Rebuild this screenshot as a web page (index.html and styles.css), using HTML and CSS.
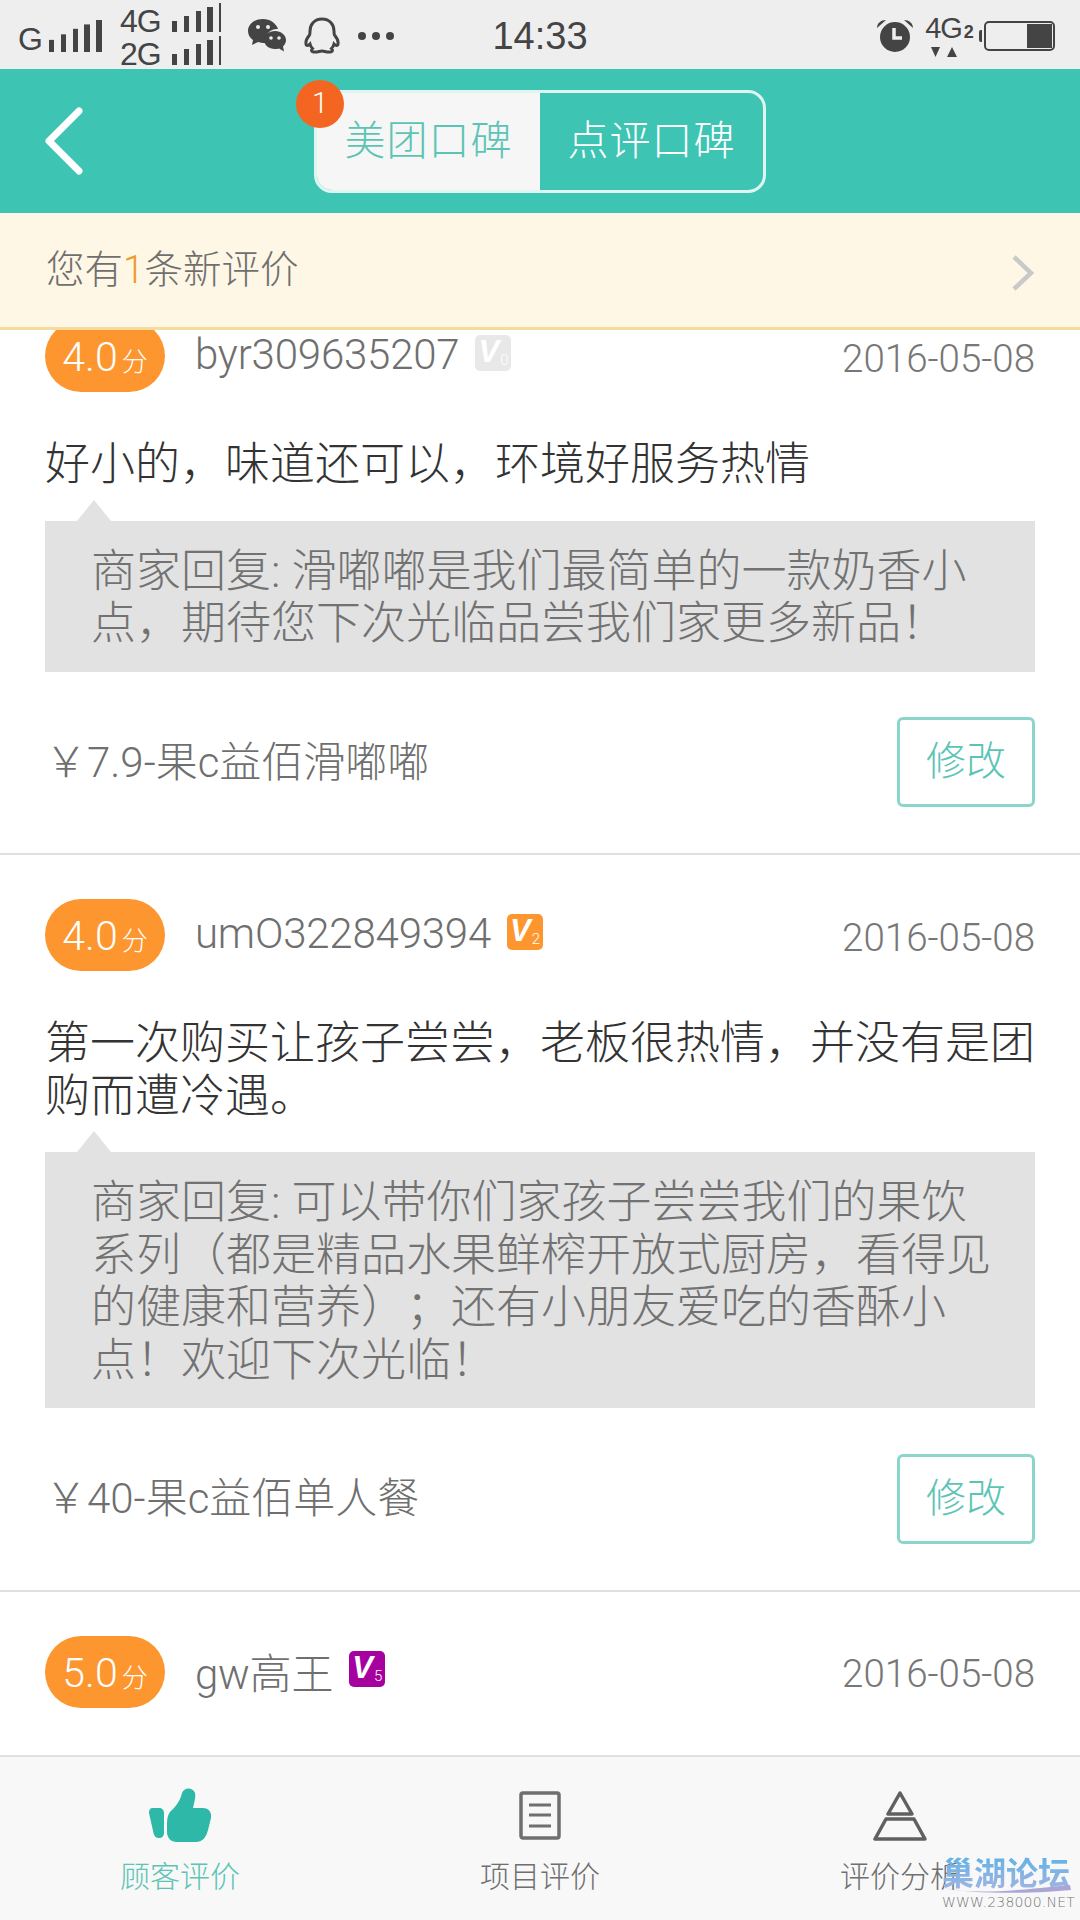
FILE: index.html
```html
<!DOCTYPE html>
<html lang="zh-CN">

<head>
    <title>顾客评价</title>
    <meta charset="utf-8">
    <link rel="stylesheet" href="styles.css">
</head>

<body>
    <svg class="defs" width="0" height="0">
        <symbol id="bars" viewBox="0 0 53 29" preserveAspectRatio="none">
            <rect x="0" y="18" width="5" height="11" />
            <rect x="12" y="13" width="5" height="16" />
            <rect x="24" y="8" width="5" height="21" />
            <rect x="35" y="4" width="6" height="25" />
            <rect x="47" y="0" width="6" height="29" />
        </symbol>
    </svg>

    <div class="app">
        <div class="status">
            <div class="status_left">
                <span class="net net_g">G</span>
                <svg class="bars_big" width="53" height="32"><use href="#bars" width="53" height="32" /></svg>
                <div class="sims">
                    <div class="sim"><span class="net">4G</span><svg width="53" height="29"><use href="#bars" width="53" height="29" /></svg></div>
                    <div class="sim"><span class="net">2G</span><svg width="53" height="29"><use href="#bars" width="53" height="29" /></svg></div>
                </div>
                <svg class="ic_wechat" width="38" height="33" viewBox="0 0 38 33">
                    <path d="M15 0C7 0 0 5 0 12c0 4 2 7 5 9l-1 5 6-3c1 0 3 1 5 1 1 0 2 0 3-.2A11 11 0 0 1 30 10C28 4 22 0 15 0z" fill="#444" />
                    <circle cx="10" cy="8" r="2" fill="#eee" />
                    <circle cx="20" cy="8" r="2" fill="#eee" />
                    <path d="M27 12c-6 0-11 4-11 9s5 9 11 9c1 0 3 0 4-.6l5 3-1-5c2-2 3-4 3-6.400 0-5-5-9-11-9z" fill="#444" />
                    <circle cx="23" cy="19" r="1.800" fill="#eee" />
                    <circle cx="31" cy="19" r="1.800" fill="#eee" />
                </svg>
                <svg class="ic_qq" width="36" height="37" viewBox="0 0 36 37">
                    <path d="M18 2C10 2 6 8 6 14c0 2 0 3-.5 4C3 21 1.500 24 2 27c.3 2 2 2 4 0 .5 2 1.500 3.500 2.500 4.500C7 33 7 35 11 35c3 0 5-1 7-1s4 1 7 1c4 0 4-2 2.500-3.500 1-1 2-2.500 2.500-4.500 2 2 3.700 2 4 0 .5-3-1-6-3.500-9-.5-1-.5-2-.5-4C30 8 26 2 18 2z" fill="none" stroke="#444" stroke-width="3" />
                </svg>
                <div class="dots"><i></i><i></i><i></i></div>
            </div>
            <div class="time">14:33</div>
            <div class="status_right">
                <svg class="ic_alarm" width="36" height="33" viewBox="0 0 36 33">
                    <circle cx="18" cy="18" r="15" fill="#444" />
                    <path d="M0 9c0-5 4-8 9-8zM36 9c0-5-4-8-9-8z" fill="#444" />
                    <path d="M17 9v10h8" fill="none" stroke="#eee" stroke-width="3.500" />
                </svg>
                <div class="net_4g">
                    <span class="net4g_txt">4G<b>2</b></span>
                    <svg width="26" height="10" viewBox="0 0 26 10">
                        <path d="M0 0h9L4.500 10zM16 10h10L21 0z" fill="#444" />
                    </svg>
                </div>
                <div class="battery"><i></i></div>
            </div>
        </div>

        <header class="head">
            <svg class="back" width="46" height="72" viewBox="0 0 46 72">
                <path d="M38 6 8 36l30 30" fill="none" stroke="#fff" stroke-width="7" stroke-linecap="round" stroke-linejoin="round" />
            </svg>
            <div class="tabs">
                <span class="badge">1</span>
                <div class="tab valgt">美团口碑</div>
                <div class="tab">点评口碑</div>
            </div>
        </header>

        <div class="notice">
            <p>您有<span>1</span>条新评价</p>
            <svg width="24" height="38" viewBox="0 0 24 38">
                <path d="M3 3l17 16L3 35" fill="none" stroke="#c9c9c9" stroke-width="4.500" />
            </svg>
        </div>

        <section class="liste">
            <article class="card">
                <div class="top">
                    <div class="score">4.0<small>分</small></div>
                    <span class="navn">byr309635207</span>
                    <span class="lvl lvl0"><b>V</b><small>0</small></span>
                    <span class="dato">2016-05-08</span>
                </div>
                <p class="tekst">好小的，味道还可以，环境好服务热情</p>
                <div class="svar">商家回复: 滑嘟嘟是我们最简单的一款奶香小<br>点，期待您下次光临品尝我们家更多新品！</div>
                <div class="bund">
                    <span class="vare">￥7.9-果c益佰滑嘟嘟</span>
                    <button class="ret">修改</button>
                </div>
            </article>

            <article class="card">
                <div class="top">
                    <div class="score">4.0<small>分</small></div>
                    <span class="navn">umO322849394</span>
                    <span class="lvl lvl2"><b>V</b><small>2</small></span>
                    <span class="dato">2016-05-08</span>
                </div>
                <p class="tekst">第一次购买让孩子尝尝，老板很热情，并没有是团购而遭冷遇。</p>
                <div class="svar">商家回复: 可以带你们家孩子尝尝我们的果饮<br>系列（都是精品水果鲜榨开放式厨房，看得见<br>的健康和营养）；还有小朋友爱吃的香酥小<br>点！欢迎下次光临！</div>
                <div class="bund">
                    <span class="vare">￥40-果c益佰单人餐</span>
                    <button class="ret">修改</button>
                </div>
            </article>

            <article class="card">
                <div class="top">
                    <div class="score">5.0<small>分</small></div>
                    <span class="navn">gw高王</span>
                    <span class="lvl lvl5"><b>V</b><small>5</small></span>
                    <span class="dato">2016-05-08</span>
                </div>
            </article>
        </section>

        <nav class="tabbar">
            <div class="item aktiv">
                <svg width="62" height="54" viewBox="0 0 62 54">
                    <path d="M4 20h6c3 0 5 2 5 5v20c0 3-2 5-5 5s-5-2-5.500-5L0 25c0-3 1-5 4-5z" fill="#2db8a7" />
                    <path d="M18 36c0-8 2-12 6-15 6-6 8-12 9-16 2-6 11-6 13 0 1 5-1 10-2 15h10c6 0 9 5 8 10l-3 12c-2 8-6 12-12 12H28c-6 0-10-4-10-10z" fill="#2db8a7" />
                </svg>
                <span>顾客评价</span>
            </div>
            <div class="item">
                <svg width="42" height="54" viewBox="0 0 42 54">
                    <rect x="2" y="5" width="38" height="45" rx="2" fill="none" stroke="#6f6f6f" stroke-width="3.500" />
                    <path d="M10 17h22M10 27h22M10 38h22" fill="none" stroke="#6f6f6f" stroke-width="3" />
                </svg>
                <span>项目评价</span>
            </div>
            <div class="item">
                <svg width="54" height="54" viewBox="0 0 54 54">
                    <path d="M27 5 15 26h24zM13 31 2 51h50L41 31z" fill="none" stroke="#606060" stroke-width="3.500" stroke-linejoin="round" />
                </svg>
                <span>评价分析</span>
            </div>
        </nav>

        <div class="vandmaerke">
            <div class="vm_navn">巢湖论坛</div>
            <svg width="130" height="8" viewBox="0 0 130 8">
                <path d="M2 3c30 6 60 4 126-3l1 5C90 9 30 9 2 3z" fill="#a9a6d6" />
            </svg>
            <div class="vm_url">WWW.238000.NET</div>
        </div>
    </div>
</body>

</html>
```

FILE: styles.css
```css
* {
    box-sizing: border-box;
}

body {
    margin: 0;
    background-color: #fff;
    font-family: Roboto, "Noto Sans CJK SC", sans-serif;
    font-weight: 300;
    color: #333;
    text-spacing-trim: space-all;
}

p {
    margin: 0;
}

.defs {
    position: absolute;
}

.app {
    position: relative;
    width: 1080px;
    height: 1920px;
    display: flex;
    flex-direction: column;
    overflow: hidden;
}

/* statuslinje */
.status {
    height: 69px;
    flex: none;
    display: grid;
    grid-template-columns: 1fr auto 1fr;
    align-items: center;
    background-color: #eee;
    color: #444;
    fill: #444;
}

.status_left {
    display: flex;
    align-items: center;
    padding-left: 18px;
}

.net {
    font-family: "Liberation Sans", sans-serif;
    font-size: 32px;
    line-height: 33px;
    letter-spacing: -1px;
}

.net_g {
    width: 31px;
    margin-top: 8px;
}

.bars_big {
    margin-top: 1px;
}

.sims {
    margin-left: 18px;
}

.sim {
    display: flex;
    align-items: flex-start;
    gap: 11px;
    height: 33px;
    width: 101px;
}

.sim .net {
    margin-top: 2px;
}

.ic_wechat {
    margin-left: 27px;
}

.ic_qq {
    margin-left: 18px;
}

.dots {
    display: flex;
    gap: 6px;
    margin-left: 18px;
}

.dots i {
    width: 8px;
    height: 8px;
    border-radius: 50%;
    background-color: #444;
}

.time {
    font-family: "Liberation Sans", sans-serif;
    font-size: 38px;
    line-height: 69px;
    padding-top: 2px;
}

.status_right {
    display: flex;
    align-items: center;
    justify-content: flex-end;
    padding-right: 25px;
}

.net_4g {
    display: flex;
    flex-direction: column;
    align-items: center;
    margin-left: 12px;
    width: 48px;
}

.net_4g svg {
    display: block;
    margin-top: 2px;
    margin-right: 10px;
}

.net4g_txt {
    font-family: "Liberation Sans", sans-serif;
    font-size: 29px;
    line-height: 26px;
    letter-spacing: -1px;
    white-space: nowrap;
}

.net4g_txt b {
    font-weight: 700;
    font-size: 18px;
    margin-left: 2px;
}

.battery {
    position: relative;
    width: 71px;
    height: 30px;
    margin-left: 11px;
    border: 2.500px solid #444;
    border-radius: 5px;
    display: flex;
    justify-content: flex-end;
    padding: 1px;
}

.battery i {
    width: 25px;
    background-color: #444;
}

.battery::before {
    content: "";
    position: absolute;
    left: -7px;
    top: 7px;
    width: 3px;
    height: 12px;
    border-radius: 2px 0 0 2px;
    background-color: #444;
}

/* topbar */
.head {
    position: relative;
    height: 144px;
    flex: none;
    display: flex;
    align-items: center;
    justify-content: center;
    background-color: #3dc4b3;
}

.back {
    position: absolute;
    left: 41px;
    top: 36px;
}

.tabs {
    position: relative;
    display: flex;
    width: 452px;
    height: 103px;
    margin-top: 1px;
    border: 3px solid #def5f1;
    border-radius: 18px;
    overflow: visible;
}

.tab {
    flex: 1;
    display: flex;
    align-items: center;
    justify-content: center;
    padding-bottom: 9px;
    font-size: 41px;
    letter-spacing: 1px;
    color: #fff;
}

.tab.valgt {
    background-color: #f6f6f6;
    color: #5cc4b5;
    border-radius: 15px 0 0 15px;
}

.badge {
    position: absolute;
    left: -21px;
    top: -13px;
    width: 48px;
    height: 48px;
    border-radius: 50%;
    background-color: #f56522;
    color: #fff;
    font-size: 29px;
    line-height: 46px;
    text-align: center;
}

/* besked */
.notice {
    position: relative;
    z-index: 1;
    height: 117px;
    flex: none;
    display: flex;
    align-items: center;
    justify-content: space-between;
    padding: 0 45px 0 46px;
    background-color: #fff7e5;
    border-bottom: 3px solid #f5dc9c;
    font-size: 38.500px;
    color: #6f6f6f;
}

.notice p {
    margin-top: -9px;
}

.notice span {
    color: #f09a2e;
}

.notice svg {
    margin-top: 6px;
}

/* listen er scrollet lidt ned */
.liste {
    flex: 1;
    min-height: 0;
    overflow: hidden;
}

.card {
    padding: 44px 45px 46px;
    border-bottom: 2px solid #e0e0e0;
}

.card:first-child {
    margin-top: -54px;
}

.card:last-child {
    border-bottom: none;
}

.top {
    display: flex;
    align-items: center;
}

.score {
    width: 120px;
    height: 72px;
    border-radius: 36px;
    background-color: #fd962f;
    color: #fff;
    font-size: 41px;
    line-height: 74px;
    text-align: center;
    white-space: nowrap;
}

.score small {
    font-size: 26px;
    margin-left: 4px;
}

.navn {
    margin-left: 30px;
    margin-top: -3px;
    font-size: 42px;
    letter-spacing: -0.200px;
    color: #6f6f6f;
}

.lvl {
    position: relative;
    width: 36px;
    height: 36px;
    margin-left: 16px;
    margin-top: -6px;
    border-radius: 5px;
    color: #fff;
}

.lvl b {
    position: absolute;
    left: 3px;
    top: 1px;
    font-family: "Liberation Sans", sans-serif;
    font-weight: 700;
    font-size: 31px;
    line-height: 32px;
    font-style: italic;
}

.lvl small {
    position: absolute;
    right: 3px;
    bottom: 3px;
    font-size: 15px;
    line-height: 15px;
}

.lvl0 {
    background-color: #e8e8e8;
}

.lvl2 {
    background-color: #fd962f;
}

.lvl5 {
    background-color: #a6019f;
}

.dato {
    margin-left: auto;
    margin-top: 4px;
    font-size: 38.500px;
    color: #777;
}

.tekst {
    margin-top: 47px;
    font-size: 45px;
    line-height: 52.500px;
    color: #333;
}

.svar {
    position: relative;
    margin-top: 29px;
    padding: 25px 10px 21px 46px;
    background-color: #e2e2e2;
    font-size: 45px;
    line-height: 52.500px;
    color: #727272;
}

.svar::before {
    content: "";
    position: absolute;
    left: 32px;
    top: -21px;
    border-left: 17px solid transparent;
    border-right: 17px solid transparent;
    border-bottom: 21px solid #e2e2e2;
}

.bund {
    display: flex;
    align-items: center;
    justify-content: space-between;
    margin-top: 45.500px;
}

.vare {
    margin-top: -8px;
    font-size: 42px;
    color: #6f6f6f;
}

.ret {
    width: 138px;
    height: 90px;
    padding: 0 0 8px;
    background-color: #fff;
    border: 3px solid #8ad6cb;
    border-radius: 6px;
    font-family: inherit;
    font-weight: 300;
    font-size: 40px;
    color: #5cc4b5;
}

/* bundmenu */
.tabbar {
    height: 165px;
    flex: none;
    display: grid;
    grid-template-columns: repeat(3, 1fr);
    padding-top: 31px;
    background-color: #f8f8f8;
    border-top: 2px solid #e0e0e0;
}

.item {
    display: flex;
    flex-direction: column;
    align-items: center;
    gap: 17px;
    font-size: 30px;
    line-height: 36px;
    color: #6f6f6f;
}

.item svg {
    display: block;
}

.aktiv {
    color: #5cc4b5;
}

/* vandmaerke ovenpaa billedet */
.vandmaerke {
    position: absolute;
    left: 942px;
    top: 1853px;
    width: 132px;
}

.vm_navn {
    font-family: "Noto Sans CJK SC", sans-serif;
    font-weight: 700;
    font-size: 32px;
    line-height: 36px;
    background: linear-gradient(#5cb2e6, #9fb4e2);
    -webkit-background-clip: text;
    background-clip: text;
    color: transparent;
}

.vandmaerke svg {
    display: block;
    margin-top: -4px;
}

.vm_url {
    font-family: "DejaVu Sans", sans-serif;
    font-size: 14px;
    line-height: 16px;
    letter-spacing: 0.200px;
    color: #777;
    margin-top: 1px;
    white-space: nowrap;
}
```
